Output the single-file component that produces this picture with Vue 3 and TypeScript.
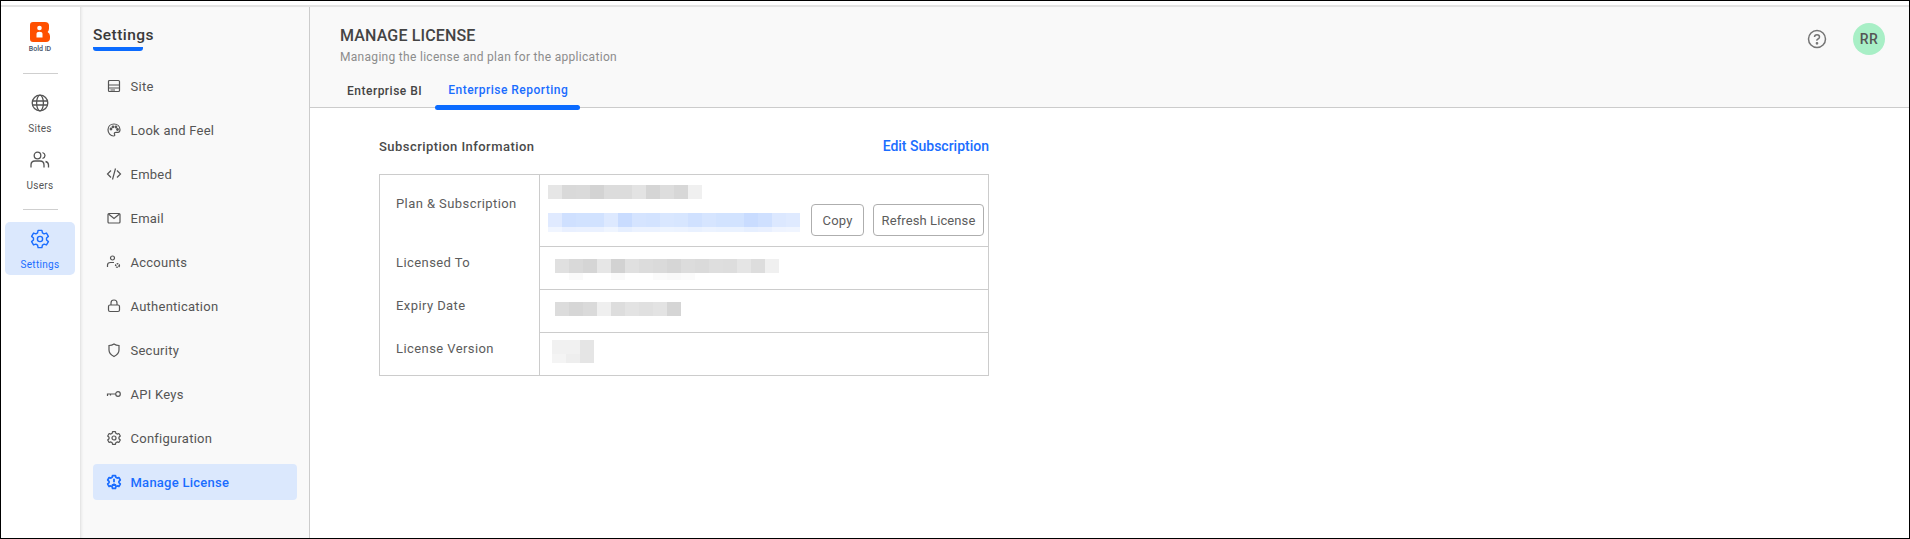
<template>
  <div class="frame">
    <div class="band" />
    <div class="page">
      <nav class="rail">
        <div class="logo">
          <svg width="20" height="20" viewBox="0 0 20 20">
            <path d="M3 0H15Q18.500 0 19 3V6.500Q19 8.500 17.600 10Q20 11.500 20 14V16Q20 20 16 20H3Q0 20 0 17V3Q0 0 3 0Z" fill="#ff5000" />
            <circle cx="9.500" cy="6" r="2.300" fill="#fff" />
            <path d="M6.500 15.500V12Q6.500 9.700 9.500 9.700T12.500 12V15.500Z" fill="#fff" />
          </svg>
          <span>Bold ID</span>
        </div>
        <div class="rail-line" />
        <a class="rail-item">
          <svg width="20" height="20" viewBox="0 0 20 20" fill="none" stroke="currentColor" stroke-width="1.300">
            <circle cx="10" cy="10" r="7.800" />
            <ellipse cx="10" cy="10" rx="3.400" ry="7.800" />
            <path d="M2.400 8H17.600M2.400 12H17.600" />
          </svg>
          <span>Sites</span>
        </a>
        <a class="rail-item">
          <svg width="20" height="20" viewBox="0 0 20 20" fill="none" stroke="currentColor" stroke-width="1.300">
            <circle cx="7.500" cy="5.500" r="3.300" />
            <path d="M1 17.500V15Q1 11 5 11H10Q14 11 14 15V17.500" />
            <path d="M12.500 2.500Q15 3.500 15 5.500T12.500 8.500M15.500 11.500Q18.500 12.300 18.500 15V17.500" />
          </svg>
          <span>Users</span>
        </a>
        <div class="rail-line second" />
        <a class="rail-item active">
          <svg width="20" height="20" viewBox="0 0 20 20" fill="none" stroke="currentColor" stroke-width="1.400" stroke-linejoin="round">
            <circle cx="10" cy="10" r="2.600" />
            <path :d="gearPath" />
          </svg>
          <span>Settings</span>
        </a>
      </nav>

      <aside class="side">
        <h2 class="side-title">Settings</h2>
        <ul class="menu">
          <li v-for="item in menu" :key="item.label" class="menu-item" :class="{ active: item.label === 'Manage License' }">
            <svg width="16" height="16" viewBox="0 0 16 16" fill="none" stroke="currentColor" stroke-width="1.200">
              <template v-if="item.label === 'Site'">
                <rect x="2.500" y="2.500" width="11" height="11" rx="1" />
                <path d="M2.500 7H13.500M2.500 10H13.500M4.500 12H9" />
              </template>
              <template v-else-if="item.label === 'Look and Feel'">
                <path d="M8 2C4.500 2 2 4.500 2 7.800S4.500 14 7.500 14C9 14 9 13 8.500 12.200S8.500 10.300 10 10.300H12C13.300 10.300 14 9.300 14 7.800C14 4.500 11.500 2 8 2Z" />
                <circle cx="5" cy="7" r=".8" fill="currentColor" />
                <circle cx="7" cy="4.800" r=".8" fill="currentColor" />
                <circle cx="10" cy="5" r=".8" fill="currentColor" />
                <circle cx="11.500" cy="7.500" r=".8" fill="currentColor" />
              </template>
              <template v-else-if="item.label === 'Embed'">
                <path d="M5 4.500L1.500 8L5 11.500M11 4.500L14.500 8L11 11.500M9.500 2.500L6.500 13.500" />
              </template>
              <template v-else-if="item.label === 'Email'">
                <rect x="2" y="3.500" width="12" height="9.500" rx="1" />
                <path d="M2.500 4L8 8.500L13.500 4" />
              </template>
              <template v-else-if="item.label === 'Accounts'">
                <circle cx="6.500" cy="4" r="2" />
                <path d="M1.500 13V11Q1.500 8.500 4.500 8.500H8" />
                <circle cx="11.500" cy="11.500" r="1.800" stroke-dasharray="1.500 .8" stroke-width="1.600" />
              </template>
              <template v-else-if="item.label === 'Authentication'">
                <rect x="2.500" y="7" width="11" height="6.500" rx="1.500" />
                <path d="M5 7V5Q5 2 8 2T11 5V7" />
              </template>
              <template v-else-if="item.label === 'Security'">
                <path d="M3 3.500Q6 3.500 8 2Q10 3.500 13 3.500V8Q13 12 8 14.500Q3 12 3 8Z" />
              </template>
              <template v-else-if="item.label === 'API Keys'">
                <circle cx="12" cy="8" r="2.300" />
                <path d="M9.500 8H1.500V10M4.500 8V9.500" />
              </template>
              <template v-else-if="item.label === 'Configuration'">
                <path :d="gearSmall" stroke-linejoin="round" />
                <circle cx="8" cy="8" r="2" />
              </template>
              <template v-else>
                <path :d="gearSmall" stroke-linejoin="round" stroke-width="1.700" />
                <path d="M8 4.800V8.200M5.800 11H10.200M8 9.500V11" stroke-width="1.800" />
              </template>
            </svg>
            <span>{{ item.label }}</span>
          </li>
        </ul>
      </aside>

      <main class="main">
        <header class="head">
          <div class="head-top">
            <div>
              <h1>MANAGE LICENSE</h1>
              <p>Managing the license and plan for the application</p>
            </div>
            <div class="head-tools">
              <svg width="20" height="20" viewBox="0 0 20 20" fill="none" stroke="#757575" stroke-width="1.500">
                <circle cx="10" cy="10" r="8.500" />
                <path d="M7.500 8Q7.500 5.700 10 5.700T12.500 8Q12.500 9.300 11 10T10 11.800" />
                <circle cx="10" cy="14.300" r=".6" fill="#757575" />
              </svg>
              <div class="avatar">RR</div>
            </div>
          </div>
          <div class="tabs">
            <a class="tab">Enterprise BI</a>
            <a class="tab active">Enterprise Reporting</a>
          </div>
        </header>

        <section class="content">
          <div class="content-head">
            <h3>Subscription Information</h3>
            <a class="edit">Edit Subscription</a>
          </div>
          <div class="table">
            <div class="row first">
              <div class="label">Plan &amp; Subscription</div>
              <div class="value">
                <div class="plan-col">
                  <div class="blur">
                    <div v-for="(row, i) in blurPlan" :key="i" class="blur-row" :style="{ height: row.h + 'px', opacity: row.o }">
                      <i v-for="(c, j) in row.cells" :key="j" :style="{ background: c }" />
                    </div>
                  </div>
                  <div class="key-row">
                    <div class="blur">
                      <div v-for="(row, i) in blurKey" :key="i" class="blur-row" :style="{ height: row.h + 'px', opacity: row.o }">
                        <i v-for="(c, j) in row.cells" :key="j" :style="{ background: c }" />
                      </div>
                    </div>
                    <button class="btn copy">Copy</button>
                    <button class="btn refresh">Refresh License</button>
                  </div>
                </div>
              </div>
            </div>
            <div class="row">
              <div class="label">Licensed To</div>
              <div class="value indent">
                <div class="blur">
                  <div v-for="(row, i) in blurName" :key="i" class="blur-row" :style="{ height: row.h + 'px', opacity: row.o }">
                    <i v-for="(c, j) in row.cells" :key="j" :style="{ background: c }" />
                  </div>
                </div>
              </div>
            </div>
            <div class="row">
              <div class="label">Expiry Date</div>
              <div class="value indent">
                <div class="blur">
                  <div v-for="(row, i) in blurDate" :key="i" class="blur-row" :style="{ height: row.h + 'px', opacity: row.o }">
                    <i v-for="(c, j) in row.cells" :key="j" :style="{ background: c }" />
                  </div>
                </div>
              </div>
            </div>
            <div class="row">
              <div class="label">License Version</div>
              <div class="value version">
                <div class="blur">
                  <div v-for="(row, i) in blurVersion" :key="i" class="blur-row" :style="{ height: row.h + 'px', opacity: row.o }">
                    <i v-for="(c, j) in row.cells" :key="j" :style="{ background: c }" />
                  </div>
                </div>
              </div>
            </div>
          </div>
        </section>
      </main>
    </div>
  </div>
</template>

<script setup lang="ts">
const menu = [
  { label: 'Site' },
  { label: 'Look and Feel' },
  { label: 'Embed' },
  { label: 'Email' },
  { label: 'Accounts' },
  { label: 'Authentication' },
  { label: 'Security' },
  { label: 'API Keys' },
  { label: 'Configuration' },
  { label: 'Manage License' },
]

// cog outline, six lobes alternating between two radii
function gear(cx: number, cy: number, outer: number, inner: number): string {
  const pts: string[] = []
  const teeth = 6
  const step = Math.PI / teeth
  for (let i = 0; i < teeth; i++) {
    const a = (i / teeth) * Math.PI * 2 - Math.PI / 2
    for (const [off, r] of [[-0.42, outer], [0.42, outer], [0.72, inner], [1.28, inner]] as const) {
      const t = a + off * step
      pts.push(`${(cx + Math.cos(t) * r).toFixed(2)} ${(cy + Math.sin(t) * r).toFixed(2)}`)
    }
  }
  return 'M' + pts.join('L') + 'Z'
}

const gearPath = gear(10, 10, 8.8, 6.6)
const gearSmall = gear(8, 8, 6.6, 5)

const blurPlan = [
  { h: 14, o: 1, cells: ['#e6e6e6', '#d9d9d9', '#dadada', '#d3d3d3', '#dcdcdc', '#dcdcdc', '#e3e3e3', '#d5d5d5', '#dddddd', '#d7d7d7', '#f0f0f0'] },
]
const keyCells = ['#e0eaff', '#cfe0ff', '#d1e2ff', '#d1e2ff', '#dde9ff', '#c9dcff', '#d5e4ff', '#d3e3ff', '#d9e7ff', '#d7e6ff', '#d0e1ff', '#d6e5ff', '#d2e3ff', '#d2e3ff', '#c9dcff', '#cfe0ff', '#dce8ff', '#dfeaff']
const blurKey = [
  { h: 14, o: 1, cells: keyCells },
  { h: 5, o: 0.45, cells: keyCells },
]
const blurName = [
  { h: 14, o: 1, cells: ['#e0e0e0', '#d9d9d9', '#d5d5d5', '#e6e6e6', '#d2d2d2', '#e0e0e0', '#dcdcdc', '#dadada', '#d6d6d6', '#dcdcdc', '#dadada', '#dedede', '#dddddd', '#e5e5e5', '#dddddd', '#f0f0f0'] },
  { h: 7, o: 1, cells: ['#fff', '#fafafa', '#fff', '#fff', '#fafafa', '#fff', '#fff', '#fbfbfb', '#f9f9f9', '#fbfbfb', '#fff', '#fff', '#fff', '#fff', '#fff', '#fff'] },
]
const blurDate = [
  { h: 14, o: 1, cells: ['#dcdcdc', '#d6d6d6', '#dadada', '#efefef', '#dddddd', '#e3e3e3', '#e0e0e0', '#e3e3e3', '#d5d5d5'] },
]
const blurVersion = [
  { h: 14, o: 1, cells: ['#f1f1f1', '#f1f1f1', '#e5e5e5'] },
  { h: 9, o: 1, cells: ['#f4f4f4', '#eeeeee', '#e5e5e5'] },
]
</script>

<style scoped>
.frame {
  width: 1910px;
  height: 539px;
  box-sizing: border-box;
  border: 1px solid #000;
  background: #fff;
  padding-top: 4px;
  display: flex;
  flex-direction: column;
  overflow: hidden;
  font-family: Roboto, "Liberation Sans", sans-serif;
  color: #3c3c3c;
}
.band {
  height: 2px;
  background: #e3e3e3;
  flex: none;
}
.page {
  flex: 1;
  display: flex;
  min-height: 0;
}
.rail {
  width: 79px;
  flex: none;
  display: flex;
  flex-direction: column;
  align-items: center;
  padding: 15px 1px 0 0;
  box-sizing: border-box;
  background: #fff;
}
.logo {
  display: flex;
  flex-direction: column;
  align-items: center;
  height: 44px;
}
.logo span {
  font-size: 7px;
  font-weight: 500;
  color: #434f66;
  margin-top: 3px;
}
.rail-line {
  width: 35px;
  height: 1px;
  background: #cfcfcf;
  margin: 7px 0 19px;
}
.rail-line.second {
  margin: 2px 0 12px;
}
.rail-item {
  width: 70px;
  height: 57px;
  border-radius: 5px;
  display: flex;
  flex-direction: column;
  align-items: center;
  color: #555;
}
.rail-item span {
  font-size: 10px;
  letter-spacing: 0.3px;
  margin-top: 10px;
  line-height: 12px;
}
.rail-item.active {
  height: 53px;
  padding-top: 7px;
  box-sizing: border-box;
  background: #dbe8fd;
  color: #1a6dff;
}
.side {
  width: 230px;
  flex: none;
  box-sizing: border-box;
  background: #f9f9f9;
  border-right: 1px solid #ccc;
  box-shadow: inset 3px 0 3px -2px #dcdcdc;
  padding: 18px 12px 0 13px;
}
.side-title {
  margin: 0 0 17px;
  font-size: 15.500px;
  font-weight: 500;
  letter-spacing: 0.45px;
  line-height: 20px;
  color: #3a3a3a;
  padding-bottom: 2px;
  width: 50px;
  white-space: nowrap;
  border-bottom: 4px solid #0b6bff;
  border-radius: 0 0 3px 3px;
}
.menu {
  list-style: none;
  margin: 0;
  padding: 0;
  display: flex;
  flex-direction: column;
  gap: 8px;
}
.menu-item {
  height: 36px;
  border-radius: 4px;
  display: flex;
  align-items: center;
  gap: 8.500px;
  padding-left: 13px;
  font-size: 13px;
  letter-spacing: 0.25px;
  color: #555;
}
.menu-item.active {
  background: #dbe8fd;
  color: #1a6dff;
  font-weight: 500;
}
.main {
  flex: 1;
  min-width: 0;
  display: flex;
  flex-direction: column;
}
.head {
  height: 101px;
  box-sizing: border-box;
  background: #f9f9f9;
  border-bottom: 1px solid #ccc;
  padding: 19px 0 0 30px;
}
.head-top {
  display: flex;
  justify-content: space-between;
}
.head h1 {
  margin: 0;
  font-size: 16px;
  font-weight: 500;
  line-height: 20px;
  letter-spacing: 0.15px;
  color: #444;
}
.head p {
  margin: 3px 0 0;
  font-size: 12px;
  line-height: 16px;
  letter-spacing: 0.3px;
  color: #8c8c8c;
}
.head-tools {
  display: flex;
  align-items: center;
  gap: 26px;
  padding-right: 24px;
  height: 32px;
  margin-top: -3px;
}
.avatar {
  width: 32px;
  height: 32px;
  border-radius: 50%;
  background: #a8efc6;
  display: flex;
  align-items: center;
  justify-content: center;
  font-size: 14px;
  font-weight: 500;
  letter-spacing: 0.5px;
  color: #555;
}
.tabs {
  display: flex;
  margin-top: 11px;
  margin-left: -6px;
  height: 30px;
}
.tab {
  padding: 0 13px;
  font-size: 12px;
  font-weight: 500;
  line-height: 30px;
  letter-spacing: 0.5px;
  color: #444;
  position: relative;
}
.tab.active {
  width: 145px;
  box-sizing: border-box;
  white-space: nowrap;
  color: #1a6dff;
  line-height: 28px;
  letter-spacing: 0.48px;
}
.tab.active::after {
  content: "";
  position: absolute;
  left: 0;
  right: 0;
  bottom: -4px;
  height: 5px;
  border-radius: 3px;
  background: #0b6bff;
}
.content {
  width: 610px;
  margin-left: 69px;
  padding-top: 28px;
}
.content-head {
  display: flex;
  justify-content: space-between;
  align-items: center;
  height: 20px;
  margin-bottom: 18px;
}
.content-head h3 {
  margin: 0;
  font-size: 13px;
  font-weight: 500;
  letter-spacing: 0.45px;
  color: #4a4a4a;
}
.edit {
  font-size: 14px;
  font-weight: 500;
  color: #1a6dff;
}
.table {
  border: 1px solid #ccc;
}
.row {
  display: grid;
  grid-template-columns: 160px 1fr;
  height: 43px;
}
.row.first {
  height: 71px;
}
.label {
  border-right: 1px solid #ccc;
  padding: 8px 0 0 16px;
  font-size: 13px;
  line-height: 18px;
  letter-spacing: 0.42px;
  color: #5c5c5c;
}
.row.first .label {
  padding-top: 20px;
}
.value {
  border-top: 1px solid #ccc;
  padding: 12px 0 0 15px;
}
.row.first .value {
  border-top: 0;
  padding: 10px 0 0 8px;
}
.value.version {
  padding: 7px 0 0 12px;
}
.blur {
  display: flex;
  flex-direction: column;
}
.blur-row {
  display: flex;
}
.blur-row i {
  width: 14px;
  height: 100%;
  display: block;
  flex: none;
}
.key-row {
  display: flex;
  align-items: flex-start;
  margin-top: 14px;
}
.key-row .blur {
  width: 252px;
}
.btn {
  margin: -9px 0 0 9px;
  height: 32px;
  box-sizing: border-box;
  padding: 0;
  background: #fff;
  border: 1px solid #aeaeae;
  border-radius: 4px;
  font-family: inherit;
  font-size: 13px;
  letter-spacing: 0.1px;
  color: #5c5c5c;
}
.btn.copy {
  width: 53px;
  margin-left: 11px;
  letter-spacing: 0.2px;
}
.btn.refresh {
  width: 111px;
}
</style>

<style>
html, body {
  margin: 0;
  background: #fff;
}
</style>
